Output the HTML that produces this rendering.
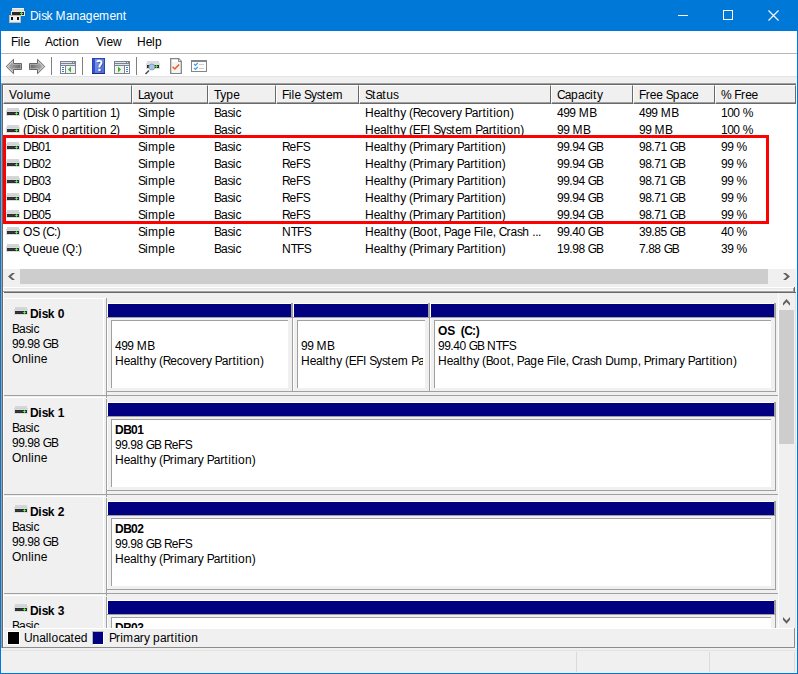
<!DOCTYPE html><html><head><meta charset="utf-8"><style>
*{margin:0;padding:0;box-sizing:border-box}
html,body{width:798px;height:674px;overflow:hidden;background:#f0f0f0}
body{position:relative;font-family:"Liberation Sans",sans-serif;font-size:12px;color:#000}
div,span,svg{position:absolute}
.t{white-space:pre;line-height:15px;height:15px}
.b{font-weight:bold}
em{font-style:normal}
</style></head><body>
<div style="left:0px;top:0px;width:798px;height:31px;background:#0078d7"></div>
<div style="left:0px;top:0px;width:1px;height:674px;background:#0078d7"></div>
<div style="left:797px;top:0px;width:1px;height:674px;background:#0078d7"></div>
<div style="left:0px;top:673px;width:798px;height:1px;background:#0078d7"></div>
<svg style="left:9px;top:7px" width="17" height="17" viewBox="0 0 17 17" shape-rendering="crispEdges">
<rect x="3" y="1" width="12" height="4" fill="#dcdcdc"/>
<rect x="3" y="1" width="12" height="1" fill="#f2eee8"/>
<rect x="2" y="4" width="14" height="5" fill="#e6e6e6"/>
<rect x="3" y="5" width="12" height="3" fill="#2b2b2b"/>
<rect x="11" y="6" width="3" height="1" fill="#3cf03c"/><rect x="12" y="5" width="1" height="3" fill="#3cf03c"/>
<rect x="0" y="8" width="12" height="8" fill="#c8b8a8"/>
<rect x="1" y="9" width="10" height="6" fill="#eeeeee"/>
<rect x="2" y="10" width="2" height="3" fill="#111"/>
<rect x="8" y="10" width="2" height="3" fill="#111"/>
</svg>
<span class="t" style="left:30px;top:9px;color:#fff"><em style="letter-spacing:-0.4px">D</em><em style="letter-spacing:0.2px">i</em><em style="letter-spacing:-0.7px">s</em>k<em style="letter-spacing:-0.2px"> </em><em style="letter-spacing:0.5px">M</em><em style="letter-spacing:-0.3px">a</em><em style="letter-spacing:0.15px">n</em><em style="letter-spacing:-0.3px">a</em><em style="letter-spacing:0.3px">g</em><em style="letter-spacing:-0.25px">e</em><em style="letter-spacing:0.4px">m</em><em style="letter-spacing:-0.25px">e</em><em style="letter-spacing:0.15px">n</em><em style="letter-spacing:0.6px">t</em></span>
<div style="left:678px;top:15px;width:10px;height:1px;background:#fff"></div>
<div style="left:723px;top:10px;width:10px;height:10px;border:1px solid #fff"></div>
<svg style="left:768px;top:10px" width="11" height="11" viewBox="0 0 11 11"><path d="M0.5 0.5L10.5 10.5M10.5 0.5L0.5 10.5" stroke="#fff" stroke-width="1.1"/></svg>
<div style="left:1px;top:31px;width:796px;height:22px;background:#fff"></div>
<span class="t" style="left:11px;top:35px;"><em style="letter-spacing:-0.7px">F</em><em style="letter-spacing:0.2px">il</em><em style="letter-spacing:-0.25px">e</em></span>
<span class="t" style="left:45px;top:35px;"><em style="letter-spacing:-0.2px">A</em><em style="letter-spacing:-0.4px">c</em><em style="letter-spacing:0.6px">t</em><em style="letter-spacing:0.2px">i</em><em style="letter-spacing:0.35px">o</em><em style="letter-spacing:0.15px">n</em></span>
<span class="t" style="left:96px;top:35px;"><em style="letter-spacing:-0.4px">V</em><em style="letter-spacing:0.2px">i</em><em style="letter-spacing:-0.25px">e</em>w</span>
<span class="t" style="left:137px;top:35px;">H<em style="letter-spacing:-0.25px">e</em><em style="letter-spacing:0.2px">l</em><em style="letter-spacing:0.35px">p</em></span>
<div style="left:1px;top:53px;width:796px;height:1px;background:#b6b6b6"></div>
<div style="left:1px;top:54px;width:796px;height:22px;background:#fff"></div>
<div style="left:1px;top:76px;width:796px;height:1px;background:#e3e3e3"></div>
<svg style="left:5px;top:58px" width="18" height="17" viewBox="0 0 18 17">
<defs><linearGradient id="gs" x1="0" y1="0" x2="1" y2="0"><stop offset="0" stop-color="#b0b0b0"/><stop offset="1" stop-color="#6a6a6a"/></linearGradient>
<linearGradient id="gs2" x1="1" y1="0" x2="0" y2="0"><stop offset="0" stop-color="#b0b0b0"/><stop offset="1" stop-color="#6a6a6a"/></linearGradient></defs>
<path d="M1.2 8.5L8.5 1.3V5.5H16.5V11.5H8.5V15.7Z" fill="#cfcfcf" stroke="#676767" stroke-width="1" stroke-linejoin="round"/>
<path d="M3.2 8.5L7.5 4.2V6.5H15.5V10.5H7.5V12.8Z" fill="url(#gs)"/>
</svg>
<svg style="left:28px;top:58px" width="18" height="17" viewBox="0 0 18 17">
<path d="M16.8 8.5L9.5 1.3V5.5H1.5V11.5H9.5V15.7Z" fill="#cfcfcf" stroke="#676767" stroke-width="1" stroke-linejoin="round"/>
<path d="M14.8 8.5L10.5 4.2V6.5H2.5V10.5H10.5V12.8Z" fill="url(#gs2)"/>
</svg>
<div style="left:51px;top:57px;width:1px;height:18px;background:#808080"></div>
<div style="left:82px;top:57px;width:1px;height:18px;background:#808080"></div>
<div style="left:136px;top:57px;width:1px;height:18px;background:#808080"></div>
<svg style="left:60px;top:61px" width="16" height="13" viewBox="0 0 16 13" shape-rendering="crispEdges">
<rect x="0" y="0" width="16" height="13" fill="#7b8391"/>
<rect x="1" y="1" width="11" height="1" fill="#dfe4ea"/><rect x="13" y="1" width="1" height="1" fill="#dfe4ea"/><rect x="14" y="1" width="1" height="1" fill="#7b8391"/>
<rect x="1" y="3" width="14" height="1" fill="#dfe4ea"/>
<rect x="1" y="5" width="4" height="7" fill="#fff"/>
<rect x="6" y="5" width="9" height="7" fill="#f2f2f2"/>
<rect x="2" y="6" width="2" height="1" fill="#3f7fcf"/><rect x="2" y="8" width="2" height="1" fill="#3f7fcf"/><rect x="2" y="10" width="2" height="1" fill="#3f7fcf"/>
<path d="M8 8.5L11 5.5V11.5Z" fill="#3cb02c" shape-rendering="auto"/>
</svg>
<svg style="left:92px;top:58px" width="13" height="16" viewBox="0 0 13 16">
<defs><linearGradient id="gh" x1="0" y1="0" x2="1" y2="1"><stop offset="0" stop-color="#7a98ee"/><stop offset="1" stop-color="#4a6ad8"/></linearGradient></defs>
<rect x="0" y="0" width="13" height="16" fill="#2a44b4"/>
<rect x="3" y="1" width="9" height="14" fill="url(#gh)"/>
<rect x="1" y="1" width="2" height="14" fill="#3552c8"/>
<rect x="0" y="15" width="13" height="1" fill="#1c2a78"/>
<path d="M6 4.8C6.3 3.1 10.5 2.8 10.3 5.3C10.2 7 8.3 7.3 8.3 9.3V10.1" fill="none" stroke="#24306a" stroke-width="2" opacity="0.6"/>
<rect x="7.3" y="11.5" width="2.2" height="2.2" fill="#24306a" opacity="0.6"/>
<path d="M5.2 4.2C5.5 2.5 9.7 2.2 9.5 4.7C9.4 6.4 7.5 6.7 7.5 8.7V9.6" fill="none" stroke="#fff" stroke-width="2"/>
<rect x="6.4" y="10.9" width="2.2" height="2.2" fill="#fff"/>
</svg>
<svg style="left:114px;top:61px" width="16" height="13" viewBox="0 0 16 13" shape-rendering="crispEdges">
<rect x="0" y="0" width="16" height="13" fill="#7b8391"/>
<rect x="1" y="1" width="11" height="1" fill="#dfe4ea"/><rect x="13" y="1" width="1" height="1" fill="#dfe4ea"/>
<rect x="1" y="3" width="14" height="1" fill="#dfe4ea"/>
<rect x="1" y="5" width="9" height="7" fill="#f2f2f2"/>
<rect x="11" y="5" width="4" height="7" fill="#fff"/>
<rect x="12" y="6" width="2" height="1" fill="#3f7fcf"/><rect x="12" y="8" width="2" height="1" fill="#3f7fcf"/><rect x="12" y="10" width="2" height="1" fill="#3f7fcf"/>
<path d="M4 5.5L7 8.5L4 11.5Z" fill="#3cb02c" shape-rendering="auto"/>
</svg>
<svg style="left:144px;top:60px" width="17" height="15" viewBox="0 0 17 15">
<rect x="3" y="1" width="12" height="3" fill="#d8dadd"/>
<rect x="2" y="3" width="14" height="6" fill="#dcdee1"/>
<rect x="3" y="5" width="12" height="3" fill="#2a2a2a"/>
<rect x="11" y="6" width="3" height="1" fill="#2ee82e"/><rect x="12" y="5" width="1" height="3" fill="#2ee82e"/>
<path d="M5 10.5L1.5 14" stroke="#4a4f5a" stroke-width="1.6"/>
<circle cx="7.8" cy="7" r="3" fill="#a9c3e0" stroke="#7c93b0" stroke-width="0.8"/>
</svg>
<svg style="left:170px;top:58px" width="12" height="16" viewBox="0 0 12 16">
<path d="M0.7 0.7H8.8L11.3 3.2V15.3H0.7Z" fill="#fff" stroke="#858585" stroke-width="1.3"/>
<path d="M8.5 0.7V3.5H11.3" fill="#eee" stroke="#858585" stroke-width="1"/>
<rect x="2" y="4" width="8" height="11" fill="#f4f4f4"/>
<path d="M2.6 8.8L4.8 11L9.2 6.4" fill="none" stroke="#f05a1e" stroke-width="1.5"/>
</svg>
<svg style="left:191px;top:60px" width="16" height="12" viewBox="0 0 16 12" shape-rendering="crispEdges">
<rect x="0" y="0" width="16" height="12" fill="#83878c"/>
<rect x="1" y="2" width="14" height="9" fill="#fff"/>
<rect x="8" y="4" width="5" height="1" fill="#cfcfcf"/><rect x="8" y="8" width="5" height="1" fill="#cfcfcf"/>
<path d="M3 3.8L4.5 5.3L6.8 2.8M3 7.8L4.5 9.3L6.8 6.8" fill="none" stroke="#3d97e6" stroke-width="1.2" shape-rendering="auto"/>
</svg>
<div style="left:1px;top:83px;width:796px;height:1px;background:#a0a0a0"></div>
<div style="left:1px;top:83px;width:1px;height:565px;background:#a0a0a0"></div>
<div style="left:2px;top:84px;width:794px;height:1px;background:#696969"></div>
<div style="left:2px;top:84px;width:1px;height:564px;background:#696969"></div>
<div style="left:796px;top:83px;width:1px;height:205px;background:#fff"></div>
<div style="left:3px;top:287px;width:794px;height:1px;background:#fff"></div>
<div style="left:3px;top:85px;width:793px;height:184px;background:#fff"></div>
<div style="left:3px;top:85px;width:129px;height:19px;background:#f0f0f0;border-top:1px solid #fff;border-left:1px solid #fff;border-right:1px solid #696969;border-bottom:1px solid #696969;box-shadow:inset 0 -1px 0 #a0a0a0"></div>
<span class="t" style="left:9px;top:88px;"><em style="letter-spacing:-0.4px">V</em><em style="letter-spacing:0.35px">o</em><em style="letter-spacing:0.2px">l</em><em style="letter-spacing:0.15px">u</em><em style="letter-spacing:0.4px">m</em><em style="letter-spacing:-0.25px">e</em></span>
<div style="left:132px;top:85px;width:76px;height:19px;background:#f0f0f0;border-top:1px solid #fff;border-left:1px solid #fff;border-right:1px solid #696969;border-bottom:1px solid #696969;box-shadow:inset 0 -1px 0 #a0a0a0"></div>
<span class="t" style="left:138px;top:88px;"><em style="letter-spacing:-1.0px">L</em><em style="letter-spacing:-0.3px">a</em><em style="letter-spacing:-0.2px">y</em><em style="letter-spacing:0.35px">o</em><em style="letter-spacing:0.15px">u</em><em style="letter-spacing:0.6px">t</em></span>
<div style="left:208px;top:85px;width:68px;height:19px;background:#f0f0f0;border-top:1px solid #fff;border-left:1px solid #fff;border-right:1px solid #696969;border-bottom:1px solid #696969;box-shadow:inset 0 -1px 0 #a0a0a0"></div>
<span class="t" style="left:214px;top:88px;"><em style="letter-spacing:-1.0px">T</em><em style="letter-spacing:-0.2px">y</em><em style="letter-spacing:0.35px">p</em><em style="letter-spacing:-0.25px">e</em></span>
<div style="left:276px;top:85px;width:83px;height:19px;background:#f0f0f0;border-top:1px solid #fff;border-left:1px solid #fff;border-right:1px solid #696969;border-bottom:1px solid #696969;box-shadow:inset 0 -1px 0 #a0a0a0"></div>
<span class="t" style="left:282px;top:88px;"><em style="letter-spacing:-0.7px">F</em><em style="letter-spacing:0.2px">il</em><em style="letter-spacing:-0.25px">e</em><em style="letter-spacing:-0.2px"> </em><em style="letter-spacing:-1.0px">S</em><em style="letter-spacing:-0.2px">y</em><em style="letter-spacing:-0.7px">s</em><em style="letter-spacing:0.6px">t</em><em style="letter-spacing:-0.25px">e</em><em style="letter-spacing:0.4px">m</em></span>
<div style="left:359px;top:85px;width:192px;height:19px;background:#f0f0f0;border-top:1px solid #fff;border-left:1px solid #fff;border-right:1px solid #696969;border-bottom:1px solid #696969;box-shadow:inset 0 -1px 0 #a0a0a0"></div>
<span class="t" style="left:365px;top:88px;"><em style="letter-spacing:-1.0px">S</em><em style="letter-spacing:0.6px">t</em><em style="letter-spacing:-0.3px">a</em><em style="letter-spacing:0.6px">t</em><em style="letter-spacing:0.15px">u</em><em style="letter-spacing:-0.7px">s</em></span>
<div style="left:551px;top:85px;width:82px;height:19px;background:#f0f0f0;border-top:1px solid #fff;border-left:1px solid #fff;border-right:1px solid #696969;border-bottom:1px solid #696969;box-shadow:inset 0 -1px 0 #a0a0a0"></div>
<span class="t" style="left:557px;top:88px;"><em style="letter-spacing:-1.0px">C</em><em style="letter-spacing:-0.3px">a</em><em style="letter-spacing:0.35px">p</em><em style="letter-spacing:-0.3px">a</em><em style="letter-spacing:-0.4px">c</em><em style="letter-spacing:0.2px">i</em><em style="letter-spacing:0.6px">t</em><em style="letter-spacing:-0.2px">y</em></span>
<div style="left:633px;top:85px;width:82px;height:19px;background:#f0f0f0;border-top:1px solid #fff;border-left:1px solid #fff;border-right:1px solid #696969;border-bottom:1px solid #696969;box-shadow:inset 0 -1px 0 #a0a0a0"></div>
<span class="t" style="left:639px;top:88px;"><em style="letter-spacing:-0.7px">F</em><em style="letter-spacing:0.2px">r</em><em style="letter-spacing:-0.25px">ee</em><em style="letter-spacing:-0.2px"> </em><em style="letter-spacing:-1.0px">S</em><em style="letter-spacing:0.35px">p</em><em style="letter-spacing:-0.3px">a</em><em style="letter-spacing:-0.4px">c</em><em style="letter-spacing:-0.25px">e</em></span>
<div style="left:715px;top:85px;width:81px;height:19px;background:#f0f0f0;border-top:1px solid #fff;border-left:1px solid #fff;border-right:1px solid #696969;border-bottom:1px solid #696969;box-shadow:inset 0 -1px 0 #a0a0a0"></div>
<span class="t" style="left:721px;top:88px;"><em style="letter-spacing:-0.5px">%</em><em style="letter-spacing:-0.2px"> </em><em style="letter-spacing:-0.7px">F</em><em style="letter-spacing:0.2px">r</em><em style="letter-spacing:-0.25px">ee</em></span>
<svg style="left:6px;top:108px" width="14" height="8" viewBox="0 0 14 8" shape-rendering="crispEdges"><rect x="1" y="0" width="12" height="2" fill="#d4d6da"/><rect x="0" y="2" width="14" height="6" fill="#d9dbdf"/><rect x="1" y="2" width="12" height="1" fill="#cfd1d5"/><rect x="1" y="4" width="12" height="3" fill="#2d2d2d"/><rect x="1" y="5" width="8" height="1" fill="#383838"/><rect x="9" y="5" width="3" height="1" fill="#3ad83a"/><rect x="10" y="4" width="1" height="3" fill="#3ad83a"/><rect x="10" y="5" width="1" height="1" fill="#6cff6c"/></svg>
<span class="t" style="left:23px;top:106px;"><em style="letter-spacing:-0.3px">(</em><em style="letter-spacing:-0.4px">D</em><em style="letter-spacing:0.2px">i</em><em style="letter-spacing:-0.7px">s</em>k<em style="letter-spacing:-0.2px"> </em><em style="letter-spacing:-0.5px">0</em><em style="letter-spacing:-0.2px"> </em><em style="letter-spacing:0.35px">p</em><em style="letter-spacing:-0.3px">a</em><em style="letter-spacing:0.2px">r</em><em style="letter-spacing:0.6px">t</em><em style="letter-spacing:0.2px">i</em><em style="letter-spacing:0.6px">t</em><em style="letter-spacing:0.2px">i</em><em style="letter-spacing:0.35px">o</em><em style="letter-spacing:0.15px">n</em><em style="letter-spacing:-0.2px"> </em><em style="letter-spacing:-0.5px">1</em><em style="letter-spacing:-0.3px">)</em></span>
<span class="t" style="left:138px;top:106px;"><em style="letter-spacing:-1.0px">S</em><em style="letter-spacing:0.2px">i</em><em style="letter-spacing:0.4px">m</em><em style="letter-spacing:0.35px">p</em><em style="letter-spacing:0.2px">l</em><em style="letter-spacing:-0.25px">e</em></span>
<span class="t" style="left:214px;top:106px;"><em style="letter-spacing:-1.0px">B</em><em style="letter-spacing:-0.3px">a</em><em style="letter-spacing:-0.7px">s</em><em style="letter-spacing:0.2px">i</em><em style="letter-spacing:-0.4px">c</em></span>
<span class="t" style="left:365px;top:106px;width:182px;overflow:hidden">H<em style="letter-spacing:-0.25px">e</em><em style="letter-spacing:-0.3px">a</em><em style="letter-spacing:0.2px">l</em><em style="letter-spacing:0.6px">t</em><em style="letter-spacing:0.15px">h</em><em style="letter-spacing:-0.2px">y </em><em style="letter-spacing:-0.3px">(</em><em style="letter-spacing:-1.1px">R</em><em style="letter-spacing:-0.25px">e</em><em style="letter-spacing:-0.4px">c</em><em style="letter-spacing:0.35px">o</em><em style="letter-spacing:-0.2px">v</em><em style="letter-spacing:-0.25px">e</em><em style="letter-spacing:0.2px">r</em><em style="letter-spacing:-0.2px">y </em><em style="letter-spacing:-1.0px">P</em><em style="letter-spacing:-0.3px">a</em><em style="letter-spacing:0.2px">r</em><em style="letter-spacing:0.6px">t</em><em style="letter-spacing:0.2px">i</em><em style="letter-spacing:0.6px">t</em><em style="letter-spacing:0.2px">i</em><em style="letter-spacing:0.35px">o</em><em style="letter-spacing:0.15px">n</em><em style="letter-spacing:-0.3px">)</em></span>
<span class="t" style="left:557px;top:106px;"><em style="letter-spacing:-0.5px">499</em><em style="letter-spacing:-0.2px"> </em><em style="letter-spacing:0.5px">M</em><em style="letter-spacing:-1.0px">B</em></span>
<span class="t" style="left:639px;top:106px;"><em style="letter-spacing:-0.5px">499</em><em style="letter-spacing:-0.2px"> </em><em style="letter-spacing:0.5px">M</em><em style="letter-spacing:-1.0px">B</em></span>
<span class="t" style="left:721px;top:106px;"><em style="letter-spacing:-0.5px">100</em><em style="letter-spacing:-0.2px"> </em><em style="letter-spacing:-0.5px">%</em></span>
<svg style="left:6px;top:125px" width="14" height="8" viewBox="0 0 14 8" shape-rendering="crispEdges"><rect x="1" y="0" width="12" height="2" fill="#d4d6da"/><rect x="0" y="2" width="14" height="6" fill="#d9dbdf"/><rect x="1" y="2" width="12" height="1" fill="#cfd1d5"/><rect x="1" y="4" width="12" height="3" fill="#2d2d2d"/><rect x="1" y="5" width="8" height="1" fill="#383838"/><rect x="9" y="5" width="3" height="1" fill="#3ad83a"/><rect x="10" y="4" width="1" height="3" fill="#3ad83a"/><rect x="10" y="5" width="1" height="1" fill="#6cff6c"/></svg>
<span class="t" style="left:23px;top:123px;"><em style="letter-spacing:-0.3px">(</em><em style="letter-spacing:-0.4px">D</em><em style="letter-spacing:0.2px">i</em><em style="letter-spacing:-0.7px">s</em>k<em style="letter-spacing:-0.2px"> </em><em style="letter-spacing:-0.5px">0</em><em style="letter-spacing:-0.2px"> </em><em style="letter-spacing:0.35px">p</em><em style="letter-spacing:-0.3px">a</em><em style="letter-spacing:0.2px">r</em><em style="letter-spacing:0.6px">t</em><em style="letter-spacing:0.2px">i</em><em style="letter-spacing:0.6px">t</em><em style="letter-spacing:0.2px">i</em><em style="letter-spacing:0.35px">o</em><em style="letter-spacing:0.15px">n</em><em style="letter-spacing:-0.2px"> </em><em style="letter-spacing:-0.5px">2</em><em style="letter-spacing:-0.3px">)</em></span>
<span class="t" style="left:138px;top:123px;"><em style="letter-spacing:-1.0px">S</em><em style="letter-spacing:0.2px">i</em><em style="letter-spacing:0.4px">m</em><em style="letter-spacing:0.35px">p</em><em style="letter-spacing:0.2px">l</em><em style="letter-spacing:-0.25px">e</em></span>
<span class="t" style="left:214px;top:123px;"><em style="letter-spacing:-1.0px">B</em><em style="letter-spacing:-0.3px">a</em><em style="letter-spacing:-0.7px">s</em><em style="letter-spacing:0.2px">i</em><em style="letter-spacing:-0.4px">c</em></span>
<span class="t" style="left:365px;top:123px;width:182px;overflow:hidden">H<em style="letter-spacing:-0.25px">e</em><em style="letter-spacing:-0.3px">a</em><em style="letter-spacing:0.2px">l</em><em style="letter-spacing:0.6px">t</em><em style="letter-spacing:0.15px">h</em><em style="letter-spacing:-0.2px">y </em><em style="letter-spacing:-0.3px">(</em><em style="letter-spacing:-0.5px">E</em><em style="letter-spacing:-0.7px">F</em><em style="letter-spacing:-0.2px">I </em><em style="letter-spacing:-1.0px">S</em><em style="letter-spacing:-0.2px">y</em><em style="letter-spacing:-0.7px">s</em><em style="letter-spacing:0.6px">t</em><em style="letter-spacing:-0.25px">e</em><em style="letter-spacing:0.4px">m</em><em style="letter-spacing:-0.2px"> </em><em style="letter-spacing:-1.0px">P</em><em style="letter-spacing:-0.3px">a</em><em style="letter-spacing:0.2px">r</em><em style="letter-spacing:0.6px">t</em><em style="letter-spacing:0.2px">i</em><em style="letter-spacing:0.6px">t</em><em style="letter-spacing:0.2px">i</em><em style="letter-spacing:0.35px">o</em><em style="letter-spacing:0.15px">n</em><em style="letter-spacing:-0.3px">)</em></span>
<span class="t" style="left:557px;top:123px;"><em style="letter-spacing:-0.5px">99</em><em style="letter-spacing:-0.2px"> </em><em style="letter-spacing:0.5px">M</em><em style="letter-spacing:-1.0px">B</em></span>
<span class="t" style="left:639px;top:123px;"><em style="letter-spacing:-0.5px">99</em><em style="letter-spacing:-0.2px"> </em><em style="letter-spacing:0.5px">M</em><em style="letter-spacing:-1.0px">B</em></span>
<span class="t" style="left:721px;top:123px;"><em style="letter-spacing:-0.5px">100</em><em style="letter-spacing:-0.2px"> </em><em style="letter-spacing:-0.5px">%</em></span>
<svg style="left:6px;top:142px" width="14" height="8" viewBox="0 0 14 8" shape-rendering="crispEdges"><rect x="1" y="0" width="12" height="2" fill="#d4d6da"/><rect x="0" y="2" width="14" height="6" fill="#d9dbdf"/><rect x="1" y="2" width="12" height="1" fill="#cfd1d5"/><rect x="1" y="4" width="12" height="3" fill="#2d2d2d"/><rect x="1" y="5" width="8" height="1" fill="#383838"/><rect x="9" y="5" width="3" height="1" fill="#3ad83a"/><rect x="10" y="4" width="1" height="3" fill="#3ad83a"/><rect x="10" y="5" width="1" height="1" fill="#6cff6c"/></svg>
<span class="t" style="left:23px;top:140px;"><em style="letter-spacing:-0.4px">D</em><em style="letter-spacing:-1.0px">B</em><em style="letter-spacing:-0.5px">01</em></span>
<span class="t" style="left:138px;top:140px;"><em style="letter-spacing:-1.0px">S</em><em style="letter-spacing:0.2px">i</em><em style="letter-spacing:0.4px">m</em><em style="letter-spacing:0.35px">p</em><em style="letter-spacing:0.2px">l</em><em style="letter-spacing:-0.25px">e</em></span>
<span class="t" style="left:214px;top:140px;"><em style="letter-spacing:-1.0px">B</em><em style="letter-spacing:-0.3px">a</em><em style="letter-spacing:-0.7px">s</em><em style="letter-spacing:0.2px">i</em><em style="letter-spacing:-0.4px">c</em></span>
<span class="t" style="left:282px;top:140px;"><em style="letter-spacing:-1.1px">R</em><em style="letter-spacing:-0.25px">e</em><em style="letter-spacing:-0.7px">F</em><em style="letter-spacing:-1.0px">S</em></span>
<span class="t" style="left:365px;top:140px;width:182px;overflow:hidden">H<em style="letter-spacing:-0.25px">e</em><em style="letter-spacing:-0.3px">a</em><em style="letter-spacing:0.2px">l</em><em style="letter-spacing:0.6px">t</em><em style="letter-spacing:0.15px">h</em><em style="letter-spacing:-0.2px">y </em><em style="letter-spacing:-0.3px">(</em><em style="letter-spacing:-1.0px">P</em><em style="letter-spacing:0.2px">ri</em><em style="letter-spacing:0.4px">m</em><em style="letter-spacing:-0.3px">a</em><em style="letter-spacing:0.2px">r</em><em style="letter-spacing:-0.2px">y </em><em style="letter-spacing:-1.0px">P</em><em style="letter-spacing:-0.3px">a</em><em style="letter-spacing:0.2px">r</em><em style="letter-spacing:0.6px">t</em><em style="letter-spacing:0.2px">i</em><em style="letter-spacing:0.6px">t</em><em style="letter-spacing:0.2px">i</em><em style="letter-spacing:0.35px">o</em><em style="letter-spacing:0.15px">n</em><em style="letter-spacing:-0.3px">)</em></span>
<span class="t" style="left:557px;top:140px;"><em style="letter-spacing:-0.5px">99</em><em style="letter-spacing:-0.4px">.</em><em style="letter-spacing:-0.5px">94</em><em style="letter-spacing:-0.2px"> </em><em style="letter-spacing:-1.2px">G</em><em style="letter-spacing:-1.0px">B</em></span>
<span class="t" style="left:639px;top:140px;"><em style="letter-spacing:-0.5px">98</em><em style="letter-spacing:-0.4px">.</em><em style="letter-spacing:-0.5px">71</em><em style="letter-spacing:-0.2px"> </em><em style="letter-spacing:-1.2px">G</em><em style="letter-spacing:-1.0px">B</em></span>
<span class="t" style="left:721px;top:140px;"><em style="letter-spacing:-0.5px">99</em><em style="letter-spacing:-0.2px"> </em><em style="letter-spacing:-0.5px">%</em></span>
<svg style="left:6px;top:159px" width="14" height="8" viewBox="0 0 14 8" shape-rendering="crispEdges"><rect x="1" y="0" width="12" height="2" fill="#d4d6da"/><rect x="0" y="2" width="14" height="6" fill="#d9dbdf"/><rect x="1" y="2" width="12" height="1" fill="#cfd1d5"/><rect x="1" y="4" width="12" height="3" fill="#2d2d2d"/><rect x="1" y="5" width="8" height="1" fill="#383838"/><rect x="9" y="5" width="3" height="1" fill="#3ad83a"/><rect x="10" y="4" width="1" height="3" fill="#3ad83a"/><rect x="10" y="5" width="1" height="1" fill="#6cff6c"/></svg>
<span class="t" style="left:23px;top:157px;"><em style="letter-spacing:-0.4px">D</em><em style="letter-spacing:-1.0px">B</em><em style="letter-spacing:-0.5px">02</em></span>
<span class="t" style="left:138px;top:157px;"><em style="letter-spacing:-1.0px">S</em><em style="letter-spacing:0.2px">i</em><em style="letter-spacing:0.4px">m</em><em style="letter-spacing:0.35px">p</em><em style="letter-spacing:0.2px">l</em><em style="letter-spacing:-0.25px">e</em></span>
<span class="t" style="left:214px;top:157px;"><em style="letter-spacing:-1.0px">B</em><em style="letter-spacing:-0.3px">a</em><em style="letter-spacing:-0.7px">s</em><em style="letter-spacing:0.2px">i</em><em style="letter-spacing:-0.4px">c</em></span>
<span class="t" style="left:282px;top:157px;"><em style="letter-spacing:-1.1px">R</em><em style="letter-spacing:-0.25px">e</em><em style="letter-spacing:-0.7px">F</em><em style="letter-spacing:-1.0px">S</em></span>
<span class="t" style="left:365px;top:157px;width:182px;overflow:hidden">H<em style="letter-spacing:-0.25px">e</em><em style="letter-spacing:-0.3px">a</em><em style="letter-spacing:0.2px">l</em><em style="letter-spacing:0.6px">t</em><em style="letter-spacing:0.15px">h</em><em style="letter-spacing:-0.2px">y </em><em style="letter-spacing:-0.3px">(</em><em style="letter-spacing:-1.0px">P</em><em style="letter-spacing:0.2px">ri</em><em style="letter-spacing:0.4px">m</em><em style="letter-spacing:-0.3px">a</em><em style="letter-spacing:0.2px">r</em><em style="letter-spacing:-0.2px">y </em><em style="letter-spacing:-1.0px">P</em><em style="letter-spacing:-0.3px">a</em><em style="letter-spacing:0.2px">r</em><em style="letter-spacing:0.6px">t</em><em style="letter-spacing:0.2px">i</em><em style="letter-spacing:0.6px">t</em><em style="letter-spacing:0.2px">i</em><em style="letter-spacing:0.35px">o</em><em style="letter-spacing:0.15px">n</em><em style="letter-spacing:-0.3px">)</em></span>
<span class="t" style="left:557px;top:157px;"><em style="letter-spacing:-0.5px">99</em><em style="letter-spacing:-0.4px">.</em><em style="letter-spacing:-0.5px">94</em><em style="letter-spacing:-0.2px"> </em><em style="letter-spacing:-1.2px">G</em><em style="letter-spacing:-1.0px">B</em></span>
<span class="t" style="left:639px;top:157px;"><em style="letter-spacing:-0.5px">98</em><em style="letter-spacing:-0.4px">.</em><em style="letter-spacing:-0.5px">71</em><em style="letter-spacing:-0.2px"> </em><em style="letter-spacing:-1.2px">G</em><em style="letter-spacing:-1.0px">B</em></span>
<span class="t" style="left:721px;top:157px;"><em style="letter-spacing:-0.5px">99</em><em style="letter-spacing:-0.2px"> </em><em style="letter-spacing:-0.5px">%</em></span>
<svg style="left:6px;top:176px" width="14" height="8" viewBox="0 0 14 8" shape-rendering="crispEdges"><rect x="1" y="0" width="12" height="2" fill="#d4d6da"/><rect x="0" y="2" width="14" height="6" fill="#d9dbdf"/><rect x="1" y="2" width="12" height="1" fill="#cfd1d5"/><rect x="1" y="4" width="12" height="3" fill="#2d2d2d"/><rect x="1" y="5" width="8" height="1" fill="#383838"/><rect x="9" y="5" width="3" height="1" fill="#3ad83a"/><rect x="10" y="4" width="1" height="3" fill="#3ad83a"/><rect x="10" y="5" width="1" height="1" fill="#6cff6c"/></svg>
<span class="t" style="left:23px;top:174px;"><em style="letter-spacing:-0.4px">D</em><em style="letter-spacing:-1.0px">B</em><em style="letter-spacing:-0.5px">03</em></span>
<span class="t" style="left:138px;top:174px;"><em style="letter-spacing:-1.0px">S</em><em style="letter-spacing:0.2px">i</em><em style="letter-spacing:0.4px">m</em><em style="letter-spacing:0.35px">p</em><em style="letter-spacing:0.2px">l</em><em style="letter-spacing:-0.25px">e</em></span>
<span class="t" style="left:214px;top:174px;"><em style="letter-spacing:-1.0px">B</em><em style="letter-spacing:-0.3px">a</em><em style="letter-spacing:-0.7px">s</em><em style="letter-spacing:0.2px">i</em><em style="letter-spacing:-0.4px">c</em></span>
<span class="t" style="left:282px;top:174px;"><em style="letter-spacing:-1.1px">R</em><em style="letter-spacing:-0.25px">e</em><em style="letter-spacing:-0.7px">F</em><em style="letter-spacing:-1.0px">S</em></span>
<span class="t" style="left:365px;top:174px;width:182px;overflow:hidden">H<em style="letter-spacing:-0.25px">e</em><em style="letter-spacing:-0.3px">a</em><em style="letter-spacing:0.2px">l</em><em style="letter-spacing:0.6px">t</em><em style="letter-spacing:0.15px">h</em><em style="letter-spacing:-0.2px">y </em><em style="letter-spacing:-0.3px">(</em><em style="letter-spacing:-1.0px">P</em><em style="letter-spacing:0.2px">ri</em><em style="letter-spacing:0.4px">m</em><em style="letter-spacing:-0.3px">a</em><em style="letter-spacing:0.2px">r</em><em style="letter-spacing:-0.2px">y </em><em style="letter-spacing:-1.0px">P</em><em style="letter-spacing:-0.3px">a</em><em style="letter-spacing:0.2px">r</em><em style="letter-spacing:0.6px">t</em><em style="letter-spacing:0.2px">i</em><em style="letter-spacing:0.6px">t</em><em style="letter-spacing:0.2px">i</em><em style="letter-spacing:0.35px">o</em><em style="letter-spacing:0.15px">n</em><em style="letter-spacing:-0.3px">)</em></span>
<span class="t" style="left:557px;top:174px;"><em style="letter-spacing:-0.5px">99</em><em style="letter-spacing:-0.4px">.</em><em style="letter-spacing:-0.5px">94</em><em style="letter-spacing:-0.2px"> </em><em style="letter-spacing:-1.2px">G</em><em style="letter-spacing:-1.0px">B</em></span>
<span class="t" style="left:639px;top:174px;"><em style="letter-spacing:-0.5px">98</em><em style="letter-spacing:-0.4px">.</em><em style="letter-spacing:-0.5px">71</em><em style="letter-spacing:-0.2px"> </em><em style="letter-spacing:-1.2px">G</em><em style="letter-spacing:-1.0px">B</em></span>
<span class="t" style="left:721px;top:174px;"><em style="letter-spacing:-0.5px">99</em><em style="letter-spacing:-0.2px"> </em><em style="letter-spacing:-0.5px">%</em></span>
<svg style="left:6px;top:193px" width="14" height="8" viewBox="0 0 14 8" shape-rendering="crispEdges"><rect x="1" y="0" width="12" height="2" fill="#d4d6da"/><rect x="0" y="2" width="14" height="6" fill="#d9dbdf"/><rect x="1" y="2" width="12" height="1" fill="#cfd1d5"/><rect x="1" y="4" width="12" height="3" fill="#2d2d2d"/><rect x="1" y="5" width="8" height="1" fill="#383838"/><rect x="9" y="5" width="3" height="1" fill="#3ad83a"/><rect x="10" y="4" width="1" height="3" fill="#3ad83a"/><rect x="10" y="5" width="1" height="1" fill="#6cff6c"/></svg>
<span class="t" style="left:23px;top:191px;"><em style="letter-spacing:-0.4px">D</em><em style="letter-spacing:-1.0px">B</em><em style="letter-spacing:-0.5px">04</em></span>
<span class="t" style="left:138px;top:191px;"><em style="letter-spacing:-1.0px">S</em><em style="letter-spacing:0.2px">i</em><em style="letter-spacing:0.4px">m</em><em style="letter-spacing:0.35px">p</em><em style="letter-spacing:0.2px">l</em><em style="letter-spacing:-0.25px">e</em></span>
<span class="t" style="left:214px;top:191px;"><em style="letter-spacing:-1.0px">B</em><em style="letter-spacing:-0.3px">a</em><em style="letter-spacing:-0.7px">s</em><em style="letter-spacing:0.2px">i</em><em style="letter-spacing:-0.4px">c</em></span>
<span class="t" style="left:282px;top:191px;"><em style="letter-spacing:-1.1px">R</em><em style="letter-spacing:-0.25px">e</em><em style="letter-spacing:-0.7px">F</em><em style="letter-spacing:-1.0px">S</em></span>
<span class="t" style="left:365px;top:191px;width:182px;overflow:hidden">H<em style="letter-spacing:-0.25px">e</em><em style="letter-spacing:-0.3px">a</em><em style="letter-spacing:0.2px">l</em><em style="letter-spacing:0.6px">t</em><em style="letter-spacing:0.15px">h</em><em style="letter-spacing:-0.2px">y </em><em style="letter-spacing:-0.3px">(</em><em style="letter-spacing:-1.0px">P</em><em style="letter-spacing:0.2px">ri</em><em style="letter-spacing:0.4px">m</em><em style="letter-spacing:-0.3px">a</em><em style="letter-spacing:0.2px">r</em><em style="letter-spacing:-0.2px">y </em><em style="letter-spacing:-1.0px">P</em><em style="letter-spacing:-0.3px">a</em><em style="letter-spacing:0.2px">r</em><em style="letter-spacing:0.6px">t</em><em style="letter-spacing:0.2px">i</em><em style="letter-spacing:0.6px">t</em><em style="letter-spacing:0.2px">i</em><em style="letter-spacing:0.35px">o</em><em style="letter-spacing:0.15px">n</em><em style="letter-spacing:-0.3px">)</em></span>
<span class="t" style="left:557px;top:191px;"><em style="letter-spacing:-0.5px">99</em><em style="letter-spacing:-0.4px">.</em><em style="letter-spacing:-0.5px">94</em><em style="letter-spacing:-0.2px"> </em><em style="letter-spacing:-1.2px">G</em><em style="letter-spacing:-1.0px">B</em></span>
<span class="t" style="left:639px;top:191px;"><em style="letter-spacing:-0.5px">98</em><em style="letter-spacing:-0.4px">.</em><em style="letter-spacing:-0.5px">71</em><em style="letter-spacing:-0.2px"> </em><em style="letter-spacing:-1.2px">G</em><em style="letter-spacing:-1.0px">B</em></span>
<span class="t" style="left:721px;top:191px;"><em style="letter-spacing:-0.5px">99</em><em style="letter-spacing:-0.2px"> </em><em style="letter-spacing:-0.5px">%</em></span>
<svg style="left:6px;top:210px" width="14" height="8" viewBox="0 0 14 8" shape-rendering="crispEdges"><rect x="1" y="0" width="12" height="2" fill="#d4d6da"/><rect x="0" y="2" width="14" height="6" fill="#d9dbdf"/><rect x="1" y="2" width="12" height="1" fill="#cfd1d5"/><rect x="1" y="4" width="12" height="3" fill="#2d2d2d"/><rect x="1" y="5" width="8" height="1" fill="#383838"/><rect x="9" y="5" width="3" height="1" fill="#3ad83a"/><rect x="10" y="4" width="1" height="3" fill="#3ad83a"/><rect x="10" y="5" width="1" height="1" fill="#6cff6c"/></svg>
<span class="t" style="left:23px;top:208px;"><em style="letter-spacing:-0.4px">D</em><em style="letter-spacing:-1.0px">B</em><em style="letter-spacing:-0.5px">05</em></span>
<span class="t" style="left:138px;top:208px;"><em style="letter-spacing:-1.0px">S</em><em style="letter-spacing:0.2px">i</em><em style="letter-spacing:0.4px">m</em><em style="letter-spacing:0.35px">p</em><em style="letter-spacing:0.2px">l</em><em style="letter-spacing:-0.25px">e</em></span>
<span class="t" style="left:214px;top:208px;"><em style="letter-spacing:-1.0px">B</em><em style="letter-spacing:-0.3px">a</em><em style="letter-spacing:-0.7px">s</em><em style="letter-spacing:0.2px">i</em><em style="letter-spacing:-0.4px">c</em></span>
<span class="t" style="left:282px;top:208px;"><em style="letter-spacing:-1.1px">R</em><em style="letter-spacing:-0.25px">e</em><em style="letter-spacing:-0.7px">F</em><em style="letter-spacing:-1.0px">S</em></span>
<span class="t" style="left:365px;top:208px;width:182px;overflow:hidden">H<em style="letter-spacing:-0.25px">e</em><em style="letter-spacing:-0.3px">a</em><em style="letter-spacing:0.2px">l</em><em style="letter-spacing:0.6px">t</em><em style="letter-spacing:0.15px">h</em><em style="letter-spacing:-0.2px">y </em><em style="letter-spacing:-0.3px">(</em><em style="letter-spacing:-1.0px">P</em><em style="letter-spacing:0.2px">ri</em><em style="letter-spacing:0.4px">m</em><em style="letter-spacing:-0.3px">a</em><em style="letter-spacing:0.2px">r</em><em style="letter-spacing:-0.2px">y </em><em style="letter-spacing:-1.0px">P</em><em style="letter-spacing:-0.3px">a</em><em style="letter-spacing:0.2px">r</em><em style="letter-spacing:0.6px">t</em><em style="letter-spacing:0.2px">i</em><em style="letter-spacing:0.6px">t</em><em style="letter-spacing:0.2px">i</em><em style="letter-spacing:0.35px">o</em><em style="letter-spacing:0.15px">n</em><em style="letter-spacing:-0.3px">)</em></span>
<span class="t" style="left:557px;top:208px;"><em style="letter-spacing:-0.5px">99</em><em style="letter-spacing:-0.4px">.</em><em style="letter-spacing:-0.5px">94</em><em style="letter-spacing:-0.2px"> </em><em style="letter-spacing:-1.2px">G</em><em style="letter-spacing:-1.0px">B</em></span>
<span class="t" style="left:639px;top:208px;"><em style="letter-spacing:-0.5px">98</em><em style="letter-spacing:-0.4px">.</em><em style="letter-spacing:-0.5px">71</em><em style="letter-spacing:-0.2px"> </em><em style="letter-spacing:-1.2px">G</em><em style="letter-spacing:-1.0px">B</em></span>
<span class="t" style="left:721px;top:208px;"><em style="letter-spacing:-0.5px">99</em><em style="letter-spacing:-0.2px"> </em><em style="letter-spacing:-0.5px">%</em></span>
<svg style="left:6px;top:227px" width="14" height="8" viewBox="0 0 14 8" shape-rendering="crispEdges"><rect x="1" y="0" width="12" height="2" fill="#d4d6da"/><rect x="0" y="2" width="14" height="6" fill="#d9dbdf"/><rect x="1" y="2" width="12" height="1" fill="#cfd1d5"/><rect x="1" y="4" width="12" height="3" fill="#2d2d2d"/><rect x="1" y="5" width="8" height="1" fill="#383838"/><rect x="9" y="5" width="3" height="1" fill="#3ad83a"/><rect x="10" y="4" width="1" height="3" fill="#3ad83a"/><rect x="10" y="5" width="1" height="1" fill="#6cff6c"/></svg>
<span class="t" style="left:23px;top:225px;">O<em style="letter-spacing:-1.0px">S</em><em style="letter-spacing:-0.2px"> </em><em style="letter-spacing:-0.3px">(</em><em style="letter-spacing:-1.0px">C</em><em style="letter-spacing:-0.4px">:</em><em style="letter-spacing:-0.3px">)</em></span>
<span class="t" style="left:138px;top:225px;"><em style="letter-spacing:-1.0px">S</em><em style="letter-spacing:0.2px">i</em><em style="letter-spacing:0.4px">m</em><em style="letter-spacing:0.35px">p</em><em style="letter-spacing:0.2px">l</em><em style="letter-spacing:-0.25px">e</em></span>
<span class="t" style="left:214px;top:225px;"><em style="letter-spacing:-1.0px">B</em><em style="letter-spacing:-0.3px">a</em><em style="letter-spacing:-0.7px">s</em><em style="letter-spacing:0.2px">i</em><em style="letter-spacing:-0.4px">c</em></span>
<span class="t" style="left:282px;top:225px;">N<em style="letter-spacing:-1.0px">T</em><em style="letter-spacing:-0.7px">F</em><em style="letter-spacing:-1.0px">S</em></span>
<span class="t" style="left:365px;top:225px;width:182px;overflow:hidden">H<em style="letter-spacing:-0.25px">e</em><em style="letter-spacing:-0.3px">a</em><em style="letter-spacing:0.2px">l</em><em style="letter-spacing:0.6px">t</em><em style="letter-spacing:0.15px">h</em><em style="letter-spacing:-0.2px">y </em><em style="letter-spacing:-0.3px">(</em><em style="letter-spacing:-1.0px">B</em><em style="letter-spacing:0.35px">oo</em><em style="letter-spacing:0.6px">t</em><em style="letter-spacing:-0.4px">,</em><em style="letter-spacing:-0.2px"> </em><em style="letter-spacing:-1.0px">P</em><em style="letter-spacing:-0.3px">a</em><em style="letter-spacing:0.3px">g</em><em style="letter-spacing:-0.25px">e</em><em style="letter-spacing:-0.2px"> </em><em style="letter-spacing:-0.7px">F</em><em style="letter-spacing:0.2px">il</em><em style="letter-spacing:-0.25px">e</em><em style="letter-spacing:-0.4px">,</em><em style="letter-spacing:-0.2px"> </em><em style="letter-spacing:-1.0px">C</em><em style="letter-spacing:0.2px">r</em><em style="letter-spacing:-0.3px">a</em><em style="letter-spacing:-0.7px">s</em><em style="letter-spacing:0.15px">h</em><em style="letter-spacing:-0.2px"> </em><em style="letter-spacing:-0.4px">...</em></span>
<span class="t" style="left:557px;top:225px;"><em style="letter-spacing:-0.5px">99</em><em style="letter-spacing:-0.4px">.</em><em style="letter-spacing:-0.5px">40</em><em style="letter-spacing:-0.2px"> </em><em style="letter-spacing:-1.2px">G</em><em style="letter-spacing:-1.0px">B</em></span>
<span class="t" style="left:639px;top:225px;"><em style="letter-spacing:-0.5px">39</em><em style="letter-spacing:-0.4px">.</em><em style="letter-spacing:-0.5px">85</em><em style="letter-spacing:-0.2px"> </em><em style="letter-spacing:-1.2px">G</em><em style="letter-spacing:-1.0px">B</em></span>
<span class="t" style="left:721px;top:225px;"><em style="letter-spacing:-0.5px">40</em><em style="letter-spacing:-0.2px"> </em><em style="letter-spacing:-0.5px">%</em></span>
<svg style="left:6px;top:244px" width="14" height="8" viewBox="0 0 14 8" shape-rendering="crispEdges"><rect x="1" y="0" width="12" height="2" fill="#d4d6da"/><rect x="0" y="2" width="14" height="6" fill="#d9dbdf"/><rect x="1" y="2" width="12" height="1" fill="#cfd1d5"/><rect x="1" y="4" width="12" height="3" fill="#2d2d2d"/><rect x="1" y="5" width="8" height="1" fill="#383838"/><rect x="9" y="5" width="3" height="1" fill="#3ad83a"/><rect x="10" y="4" width="1" height="3" fill="#3ad83a"/><rect x="10" y="5" width="1" height="1" fill="#6cff6c"/></svg>
<span class="t" style="left:23px;top:242px;">Q<em style="letter-spacing:0.15px">u</em><em style="letter-spacing:-0.25px">e</em><em style="letter-spacing:0.15px">u</em><em style="letter-spacing:-0.25px">e</em><em style="letter-spacing:-0.2px"> </em><em style="letter-spacing:-0.3px">(</em>Q<em style="letter-spacing:-0.4px">:</em><em style="letter-spacing:-0.3px">)</em></span>
<span class="t" style="left:138px;top:242px;"><em style="letter-spacing:-1.0px">S</em><em style="letter-spacing:0.2px">i</em><em style="letter-spacing:0.4px">m</em><em style="letter-spacing:0.35px">p</em><em style="letter-spacing:0.2px">l</em><em style="letter-spacing:-0.25px">e</em></span>
<span class="t" style="left:214px;top:242px;"><em style="letter-spacing:-1.0px">B</em><em style="letter-spacing:-0.3px">a</em><em style="letter-spacing:-0.7px">s</em><em style="letter-spacing:0.2px">i</em><em style="letter-spacing:-0.4px">c</em></span>
<span class="t" style="left:282px;top:242px;">N<em style="letter-spacing:-1.0px">T</em><em style="letter-spacing:-0.7px">F</em><em style="letter-spacing:-1.0px">S</em></span>
<span class="t" style="left:365px;top:242px;width:182px;overflow:hidden">H<em style="letter-spacing:-0.25px">e</em><em style="letter-spacing:-0.3px">a</em><em style="letter-spacing:0.2px">l</em><em style="letter-spacing:0.6px">t</em><em style="letter-spacing:0.15px">h</em><em style="letter-spacing:-0.2px">y </em><em style="letter-spacing:-0.3px">(</em><em style="letter-spacing:-1.0px">P</em><em style="letter-spacing:0.2px">ri</em><em style="letter-spacing:0.4px">m</em><em style="letter-spacing:-0.3px">a</em><em style="letter-spacing:0.2px">r</em><em style="letter-spacing:-0.2px">y </em><em style="letter-spacing:-1.0px">P</em><em style="letter-spacing:-0.3px">a</em><em style="letter-spacing:0.2px">r</em><em style="letter-spacing:0.6px">t</em><em style="letter-spacing:0.2px">i</em><em style="letter-spacing:0.6px">t</em><em style="letter-spacing:0.2px">i</em><em style="letter-spacing:0.35px">o</em><em style="letter-spacing:0.15px">n</em><em style="letter-spacing:-0.3px">)</em></span>
<span class="t" style="left:557px;top:242px;"><em style="letter-spacing:-0.5px">19</em><em style="letter-spacing:-0.4px">.</em><em style="letter-spacing:-0.5px">98</em><em style="letter-spacing:-0.2px"> </em><em style="letter-spacing:-1.2px">G</em><em style="letter-spacing:-1.0px">B</em></span>
<span class="t" style="left:639px;top:242px;"><em style="letter-spacing:-0.5px">7</em><em style="letter-spacing:-0.4px">.</em><em style="letter-spacing:-0.5px">88</em><em style="letter-spacing:-0.2px"> </em><em style="letter-spacing:-1.2px">G</em><em style="letter-spacing:-1.0px">B</em></span>
<span class="t" style="left:721px;top:242px;"><em style="letter-spacing:-0.5px">39</em><em style="letter-spacing:-0.2px"> </em><em style="letter-spacing:-0.5px">%</em></span>
<div style="left:3px;top:135px;width:766px;height:89px;border:3px solid #ff0000"></div>
<div style="left:3px;top:269px;width:793px;height:17px;background:#f0f0f0"></div>
<div style="left:20px;top:269px;width:748px;height:15px;background:#cdcdcd"></div>
<svg style="left:8px;top:273px" width="8" height="8" viewBox="0 0 8 8"><path d="M0 3.5L4.1 0H7L3 3.5L7 7H4.1Z" fill="#606060"/></svg>
<svg style="left:783px;top:273px" width="8" height="8" viewBox="0 0 8 8"><path d="M7 3.5L2.9 0H0L4 3.5L0 7H2.9Z" fill="#606060"/></svg>
<div style="left:3px;top:288px;width:793px;height:3px;background:#f0f0f0"></div>
<div style="left:3px;top:287px;width:793px;height:1px;background:#fff"></div>
<div style="left:3px;top:288px;width:792px;height:1px;background:#e8e8e8"></div>
<div style="left:3px;top:290px;width:792px;height:1px;background:#f6f6f6"></div>
<div style="left:3px;top:291px;width:792px;height:1px;background:#a0a0a0"></div>
<div style="left:2px;top:292px;width:794px;height:1px;background:#696969"></div>
<div style="left:794px;top:287px;width:1px;height:6px;background:#696969"></div>
<div style="left:793px;top:288px;width:1px;height:4px;background:#a0a0a0"></div>
<div style="left:3px;top:293px;width:793px;height:335px;overflow:hidden;background:#f0f0f0">
<div style="left:0px;top:5px;width:103px;height:1px;background:#fff"></div>
<div style="left:100px;top:5px;width:1px;height:97px;background:#fff"></div>
<div style="left:0px;top:102px;width:775px;height:1px;background:#a0a0a0"></div>
<svg style="left:11px;top:14px" width="14" height="8" viewBox="0 0 14 8" shape-rendering="crispEdges"><rect x="1" y="0" width="12" height="2" fill="#d4d6da"/><rect x="0" y="2" width="14" height="6" fill="#d9dbdf"/><rect x="1" y="2" width="12" height="1" fill="#cfd1d5"/><rect x="1" y="4" width="12" height="3" fill="#2d2d2d"/><rect x="1" y="5" width="8" height="1" fill="#383838"/><rect x="9" y="5" width="3" height="1" fill="#3ad83a"/><rect x="10" y="4" width="1" height="3" fill="#3ad83a"/><rect x="10" y="5" width="1" height="1" fill="#6cff6c"/></svg>
<span class="t" style="left:27px;top:14px;font-weight:bold"><em style="letter-spacing:-0.4px">D</em><em style="letter-spacing:0.2px">i</em><em style="letter-spacing:-0.7px">s</em>k<em style="letter-spacing:-0.2px"> </em><em style="letter-spacing:-0.5px">0</em></span>
<span class="t" style="left:9px;top:29px;"><em style="letter-spacing:-1.0px">B</em><em style="letter-spacing:-0.3px">a</em><em style="letter-spacing:-0.7px">s</em><em style="letter-spacing:0.2px">i</em><em style="letter-spacing:-0.4px">c</em></span>
<span class="t" style="left:9px;top:44px;"><em style="letter-spacing:-0.5px">99</em><em style="letter-spacing:-0.4px">.</em><em style="letter-spacing:-0.5px">98</em><em style="letter-spacing:-0.2px"> </em><em style="letter-spacing:-1.2px">G</em><em style="letter-spacing:-1.0px">B</em></span>
<span class="t" style="left:9px;top:59px;">O<em style="letter-spacing:0.15px">n</em><em style="letter-spacing:0.2px">li</em><em style="letter-spacing:0.15px">n</em><em style="letter-spacing:-0.25px">e</em></span>
<div style="left:103px;top:5px;width:1px;height:100px;background:#a0a0a0"></div>
<div style="left:104px;top:10px;width:184px;height:1px;background:#fff"></div>
<div style="left:104px;top:10px;width:1px;height:88px;background:#fff"></div>
<div style="left:105px;top:11px;width:183px;height:13px;background:#000080"></div>
<div style="left:288px;top:10px;width:1px;height:15px;background:#a0a0a0"></div>
<div style="left:104px;top:24px;width:184px;height:1px;background:#a0a0a0"></div>
<div style="left:108px;top:27px;width:177px;height:68px;background:#fff;border-left:1px solid #a0a0a0;border-top:1px solid #a0a0a0"></div>
<span class="t" style="left:112px;top:46px;width:171px;overflow:hidden"><em style="letter-spacing:-0.5px">499</em><em style="letter-spacing:-0.2px"> </em><em style="letter-spacing:0.5px">M</em><em style="letter-spacing:-1.0px">B</em></span>
<span class="t" style="left:112px;top:61px;width:171px;overflow:hidden">H<em style="letter-spacing:-0.25px">e</em><em style="letter-spacing:-0.3px">a</em><em style="letter-spacing:0.2px">l</em><em style="letter-spacing:0.6px">t</em><em style="letter-spacing:0.15px">h</em><em style="letter-spacing:-0.2px">y </em><em style="letter-spacing:-0.3px">(</em><em style="letter-spacing:-1.1px">R</em><em style="letter-spacing:-0.25px">e</em><em style="letter-spacing:-0.4px">c</em><em style="letter-spacing:0.35px">o</em><em style="letter-spacing:-0.2px">v</em><em style="letter-spacing:-0.25px">e</em><em style="letter-spacing:0.2px">r</em><em style="letter-spacing:-0.2px">y </em><em style="letter-spacing:-1.0px">P</em><em style="letter-spacing:-0.3px">a</em><em style="letter-spacing:0.2px">r</em><em style="letter-spacing:0.6px">t</em><em style="letter-spacing:0.2px">i</em><em style="letter-spacing:0.6px">t</em><em style="letter-spacing:0.2px">i</em><em style="letter-spacing:0.35px">o</em><em style="letter-spacing:0.15px">n</em><em style="letter-spacing:-0.3px">)</em></span>
<div style="left:289px;top:10px;width:1px;height:89px;background:#a0a0a0"></div>
<div style="left:290px;top:10px;width:135px;height:1px;background:#fff"></div>
<div style="left:290px;top:10px;width:1px;height:88px;background:#fff"></div>
<div style="left:291px;top:11px;width:134px;height:13px;background:#000080"></div>
<div style="left:425px;top:10px;width:1px;height:15px;background:#a0a0a0"></div>
<div style="left:290px;top:24px;width:135px;height:1px;background:#a0a0a0"></div>
<div style="left:294px;top:27px;width:128px;height:68px;background:#fff;border-left:1px solid #a0a0a0;border-top:1px solid #a0a0a0"></div>
<span class="t" style="left:298px;top:46px;width:122px;overflow:hidden"><em style="letter-spacing:-0.5px">99</em><em style="letter-spacing:-0.2px"> </em><em style="letter-spacing:0.5px">M</em><em style="letter-spacing:-1.0px">B</em></span>
<span class="t" style="left:298px;top:61px;width:122px;overflow:hidden">H<em style="letter-spacing:-0.25px">e</em><em style="letter-spacing:-0.3px">a</em><em style="letter-spacing:0.2px">l</em><em style="letter-spacing:0.6px">t</em><em style="letter-spacing:0.15px">h</em><em style="letter-spacing:-0.2px">y </em><em style="letter-spacing:-0.3px">(</em><em style="letter-spacing:-0.5px">E</em><em style="letter-spacing:-0.7px">F</em><em style="letter-spacing:-0.2px">I </em><em style="letter-spacing:-1.0px">S</em><em style="letter-spacing:-0.2px">y</em><em style="letter-spacing:-0.7px">s</em><em style="letter-spacing:0.6px">t</em><em style="letter-spacing:-0.25px">e</em><em style="letter-spacing:0.4px">m</em><em style="letter-spacing:-0.2px"> </em><em style="letter-spacing:-1.0px">P</em><em style="letter-spacing:-0.3px">a</em><em style="letter-spacing:0.2px">r</em><em style="letter-spacing:0.6px">t</em><em style="letter-spacing:0.2px">i</em><em style="letter-spacing:0.6px">t</em><em style="letter-spacing:0.2px">i</em><em style="letter-spacing:0.35px">o</em><em style="letter-spacing:0.15px">n</em><em style="letter-spacing:-0.3px">)</em></span>
<div style="left:426px;top:10px;width:1px;height:89px;background:#a0a0a0"></div>
<div style="left:427px;top:10px;width:344px;height:1px;background:#fff"></div>
<div style="left:427px;top:10px;width:1px;height:88px;background:#fff"></div>
<div style="left:428px;top:11px;width:343px;height:13px;background:#000080"></div>
<div style="left:771px;top:10px;width:1px;height:15px;background:#a0a0a0"></div>
<div style="left:427px;top:24px;width:344px;height:1px;background:#a0a0a0"></div>
<div style="left:772px;top:10px;width:1px;height:89px;background:#a0a0a0"></div>
<div style="left:103px;top:98px;width:670px;height:1px;background:#a0a0a0"></div>
<div style="left:431px;top:27px;width:337px;height:68px;background:#fff;border-left:1px solid #a0a0a0;border-top:1px solid #a0a0a0"></div>
<span class="t" style="left:435px;top:31px;font-weight:bold;width:331px;overflow:hidden">O<em style="letter-spacing:-1.0px">S</em><em style="letter-spacing:-0.2px">  </em><em style="letter-spacing:-0.3px">(</em><em style="letter-spacing:-1.0px">C</em><em style="letter-spacing:-0.4px">:</em><em style="letter-spacing:-0.3px">)</em></span>
<span class="t" style="left:435px;top:46px;width:331px;overflow:hidden"><em style="letter-spacing:-0.5px">99</em><em style="letter-spacing:-0.4px">.</em><em style="letter-spacing:-0.5px">40</em><em style="letter-spacing:-0.2px"> </em><em style="letter-spacing:-1.2px">G</em><em style="letter-spacing:-1.0px">B</em><em style="letter-spacing:-0.2px"> </em>N<em style="letter-spacing:-1.0px">T</em><em style="letter-spacing:-0.7px">F</em><em style="letter-spacing:-1.0px">S</em></span>
<span class="t" style="left:435px;top:61px;width:331px;overflow:hidden">H<em style="letter-spacing:-0.25px">e</em><em style="letter-spacing:-0.3px">a</em><em style="letter-spacing:0.2px">l</em><em style="letter-spacing:0.6px">t</em><em style="letter-spacing:0.15px">h</em><em style="letter-spacing:-0.2px">y </em><em style="letter-spacing:-0.3px">(</em><em style="letter-spacing:-1.0px">B</em><em style="letter-spacing:0.35px">oo</em><em style="letter-spacing:0.6px">t</em><em style="letter-spacing:-0.4px">,</em><em style="letter-spacing:-0.2px"> </em><em style="letter-spacing:-1.0px">P</em><em style="letter-spacing:-0.3px">a</em><em style="letter-spacing:0.3px">g</em><em style="letter-spacing:-0.25px">e</em><em style="letter-spacing:-0.2px"> </em><em style="letter-spacing:-0.7px">F</em><em style="letter-spacing:0.2px">il</em><em style="letter-spacing:-0.25px">e</em><em style="letter-spacing:-0.4px">,</em><em style="letter-spacing:-0.2px"> </em><em style="letter-spacing:-1.0px">C</em><em style="letter-spacing:0.2px">r</em><em style="letter-spacing:-0.3px">a</em><em style="letter-spacing:-0.7px">s</em><em style="letter-spacing:0.15px">h</em><em style="letter-spacing:-0.2px"> </em><em style="letter-spacing:-0.4px">D</em><em style="letter-spacing:0.15px">u</em><em style="letter-spacing:0.4px">m</em><em style="letter-spacing:0.35px">p</em><em style="letter-spacing:-0.4px">,</em><em style="letter-spacing:-0.2px"> </em><em style="letter-spacing:-1.0px">P</em><em style="letter-spacing:0.2px">ri</em><em style="letter-spacing:0.4px">m</em><em style="letter-spacing:-0.3px">a</em><em style="letter-spacing:0.2px">r</em><em style="letter-spacing:-0.2px">y </em><em style="letter-spacing:-1.0px">P</em><em style="letter-spacing:-0.3px">a</em><em style="letter-spacing:0.2px">r</em><em style="letter-spacing:0.6px">t</em><em style="letter-spacing:0.2px">i</em><em style="letter-spacing:0.6px">t</em><em style="letter-spacing:0.2px">i</em><em style="letter-spacing:0.35px">o</em><em style="letter-spacing:0.15px">n</em><em style="letter-spacing:-0.3px">)</em></span>
<div style="left:0px;top:104px;width:103px;height:1px;background:#fff"></div>
<div style="left:100px;top:104px;width:1px;height:97px;background:#fff"></div>
<div style="left:0px;top:201px;width:775px;height:1px;background:#a0a0a0"></div>
<svg style="left:11px;top:113px" width="14" height="8" viewBox="0 0 14 8" shape-rendering="crispEdges"><rect x="1" y="0" width="12" height="2" fill="#d4d6da"/><rect x="0" y="2" width="14" height="6" fill="#d9dbdf"/><rect x="1" y="2" width="12" height="1" fill="#cfd1d5"/><rect x="1" y="4" width="12" height="3" fill="#2d2d2d"/><rect x="1" y="5" width="8" height="1" fill="#383838"/><rect x="9" y="5" width="3" height="1" fill="#3ad83a"/><rect x="10" y="4" width="1" height="3" fill="#3ad83a"/><rect x="10" y="5" width="1" height="1" fill="#6cff6c"/></svg>
<span class="t" style="left:27px;top:113px;font-weight:bold"><em style="letter-spacing:-0.4px">D</em><em style="letter-spacing:0.2px">i</em><em style="letter-spacing:-0.7px">s</em>k<em style="letter-spacing:-0.2px"> </em><em style="letter-spacing:-0.5px">1</em></span>
<span class="t" style="left:9px;top:128px;"><em style="letter-spacing:-1.0px">B</em><em style="letter-spacing:-0.3px">a</em><em style="letter-spacing:-0.7px">s</em><em style="letter-spacing:0.2px">i</em><em style="letter-spacing:-0.4px">c</em></span>
<span class="t" style="left:9px;top:143px;"><em style="letter-spacing:-0.5px">99</em><em style="letter-spacing:-0.4px">.</em><em style="letter-spacing:-0.5px">98</em><em style="letter-spacing:-0.2px"> </em><em style="letter-spacing:-1.2px">G</em><em style="letter-spacing:-1.0px">B</em></span>
<span class="t" style="left:9px;top:158px;">O<em style="letter-spacing:0.15px">n</em><em style="letter-spacing:0.2px">li</em><em style="letter-spacing:0.15px">n</em><em style="letter-spacing:-0.25px">e</em></span>
<div style="left:103px;top:106px;width:1px;height:98px;background:#a0a0a0"></div>
<div style="left:104px;top:109px;width:667px;height:1px;background:#fff"></div>
<div style="left:104px;top:109px;width:1px;height:88px;background:#fff"></div>
<div style="left:105px;top:110px;width:666px;height:13px;background:#000080"></div>
<div style="left:771px;top:109px;width:1px;height:15px;background:#a0a0a0"></div>
<div style="left:104px;top:123px;width:667px;height:1px;background:#a0a0a0"></div>
<div style="left:772px;top:109px;width:1px;height:89px;background:#a0a0a0"></div>
<div style="left:103px;top:197px;width:670px;height:1px;background:#a0a0a0"></div>
<div style="left:108px;top:126px;width:660px;height:68px;background:#fff;border-left:1px solid #a0a0a0;border-top:1px solid #a0a0a0"></div>
<span class="t" style="left:112px;top:130px;font-weight:bold;width:654px;overflow:hidden"><em style="letter-spacing:-0.4px">D</em><em style="letter-spacing:-1.0px">B</em><em style="letter-spacing:-0.5px">01</em></span>
<span class="t" style="left:112px;top:145px;width:654px;overflow:hidden"><em style="letter-spacing:-0.5px">99</em><em style="letter-spacing:-0.4px">.</em><em style="letter-spacing:-0.5px">98</em><em style="letter-spacing:-0.2px"> </em><em style="letter-spacing:-1.2px">G</em><em style="letter-spacing:-1.0px">B</em><em style="letter-spacing:-0.2px"> </em><em style="letter-spacing:-1.1px">R</em><em style="letter-spacing:-0.25px">e</em><em style="letter-spacing:-0.7px">F</em><em style="letter-spacing:-1.0px">S</em></span>
<span class="t" style="left:112px;top:160px;width:654px;overflow:hidden">H<em style="letter-spacing:-0.25px">e</em><em style="letter-spacing:-0.3px">a</em><em style="letter-spacing:0.2px">l</em><em style="letter-spacing:0.6px">t</em><em style="letter-spacing:0.15px">h</em><em style="letter-spacing:-0.2px">y </em><em style="letter-spacing:-0.3px">(</em><em style="letter-spacing:-1.0px">P</em><em style="letter-spacing:0.2px">ri</em><em style="letter-spacing:0.4px">m</em><em style="letter-spacing:-0.3px">a</em><em style="letter-spacing:0.2px">r</em><em style="letter-spacing:-0.2px">y </em><em style="letter-spacing:-1.0px">P</em><em style="letter-spacing:-0.3px">a</em><em style="letter-spacing:0.2px">r</em><em style="letter-spacing:0.6px">t</em><em style="letter-spacing:0.2px">i</em><em style="letter-spacing:0.6px">t</em><em style="letter-spacing:0.2px">i</em><em style="letter-spacing:0.35px">o</em><em style="letter-spacing:0.15px">n</em><em style="letter-spacing:-0.3px">)</em></span>
<div style="left:0px;top:203px;width:103px;height:1px;background:#fff"></div>
<div style="left:100px;top:203px;width:1px;height:97px;background:#fff"></div>
<div style="left:0px;top:300px;width:775px;height:1px;background:#a0a0a0"></div>
<svg style="left:11px;top:212px" width="14" height="8" viewBox="0 0 14 8" shape-rendering="crispEdges"><rect x="1" y="0" width="12" height="2" fill="#d4d6da"/><rect x="0" y="2" width="14" height="6" fill="#d9dbdf"/><rect x="1" y="2" width="12" height="1" fill="#cfd1d5"/><rect x="1" y="4" width="12" height="3" fill="#2d2d2d"/><rect x="1" y="5" width="8" height="1" fill="#383838"/><rect x="9" y="5" width="3" height="1" fill="#3ad83a"/><rect x="10" y="4" width="1" height="3" fill="#3ad83a"/><rect x="10" y="5" width="1" height="1" fill="#6cff6c"/></svg>
<span class="t" style="left:27px;top:212px;font-weight:bold"><em style="letter-spacing:-0.4px">D</em><em style="letter-spacing:0.2px">i</em><em style="letter-spacing:-0.7px">s</em>k<em style="letter-spacing:-0.2px"> </em><em style="letter-spacing:-0.5px">2</em></span>
<span class="t" style="left:9px;top:227px;"><em style="letter-spacing:-1.0px">B</em><em style="letter-spacing:-0.3px">a</em><em style="letter-spacing:-0.7px">s</em><em style="letter-spacing:0.2px">i</em><em style="letter-spacing:-0.4px">c</em></span>
<span class="t" style="left:9px;top:242px;"><em style="letter-spacing:-0.5px">99</em><em style="letter-spacing:-0.4px">.</em><em style="letter-spacing:-0.5px">98</em><em style="letter-spacing:-0.2px"> </em><em style="letter-spacing:-1.2px">G</em><em style="letter-spacing:-1.0px">B</em></span>
<span class="t" style="left:9px;top:257px;">O<em style="letter-spacing:0.15px">n</em><em style="letter-spacing:0.2px">li</em><em style="letter-spacing:0.15px">n</em><em style="letter-spacing:-0.25px">e</em></span>
<div style="left:103px;top:205px;width:1px;height:98px;background:#a0a0a0"></div>
<div style="left:104px;top:208px;width:667px;height:1px;background:#fff"></div>
<div style="left:104px;top:208px;width:1px;height:88px;background:#fff"></div>
<div style="left:105px;top:209px;width:666px;height:13px;background:#000080"></div>
<div style="left:771px;top:208px;width:1px;height:15px;background:#a0a0a0"></div>
<div style="left:104px;top:222px;width:667px;height:1px;background:#a0a0a0"></div>
<div style="left:772px;top:208px;width:1px;height:89px;background:#a0a0a0"></div>
<div style="left:103px;top:296px;width:670px;height:1px;background:#a0a0a0"></div>
<div style="left:108px;top:225px;width:660px;height:68px;background:#fff;border-left:1px solid #a0a0a0;border-top:1px solid #a0a0a0"></div>
<span class="t" style="left:112px;top:229px;font-weight:bold;width:654px;overflow:hidden"><em style="letter-spacing:-0.4px">D</em><em style="letter-spacing:-1.0px">B</em><em style="letter-spacing:-0.5px">02</em></span>
<span class="t" style="left:112px;top:244px;width:654px;overflow:hidden"><em style="letter-spacing:-0.5px">99</em><em style="letter-spacing:-0.4px">.</em><em style="letter-spacing:-0.5px">98</em><em style="letter-spacing:-0.2px"> </em><em style="letter-spacing:-1.2px">G</em><em style="letter-spacing:-1.0px">B</em><em style="letter-spacing:-0.2px"> </em><em style="letter-spacing:-1.1px">R</em><em style="letter-spacing:-0.25px">e</em><em style="letter-spacing:-0.7px">F</em><em style="letter-spacing:-1.0px">S</em></span>
<span class="t" style="left:112px;top:259px;width:654px;overflow:hidden">H<em style="letter-spacing:-0.25px">e</em><em style="letter-spacing:-0.3px">a</em><em style="letter-spacing:0.2px">l</em><em style="letter-spacing:0.6px">t</em><em style="letter-spacing:0.15px">h</em><em style="letter-spacing:-0.2px">y </em><em style="letter-spacing:-0.3px">(</em><em style="letter-spacing:-1.0px">P</em><em style="letter-spacing:0.2px">ri</em><em style="letter-spacing:0.4px">m</em><em style="letter-spacing:-0.3px">a</em><em style="letter-spacing:0.2px">r</em><em style="letter-spacing:-0.2px">y </em><em style="letter-spacing:-1.0px">P</em><em style="letter-spacing:-0.3px">a</em><em style="letter-spacing:0.2px">r</em><em style="letter-spacing:0.6px">t</em><em style="letter-spacing:0.2px">i</em><em style="letter-spacing:0.6px">t</em><em style="letter-spacing:0.2px">i</em><em style="letter-spacing:0.35px">o</em><em style="letter-spacing:0.15px">n</em><em style="letter-spacing:-0.3px">)</em></span>
<div style="left:0px;top:302px;width:103px;height:1px;background:#fff"></div>
<div style="left:100px;top:302px;width:1px;height:97px;background:#fff"></div>
<div style="left:0px;top:399px;width:775px;height:1px;background:#a0a0a0"></div>
<svg style="left:11px;top:311px" width="14" height="8" viewBox="0 0 14 8" shape-rendering="crispEdges"><rect x="1" y="0" width="12" height="2" fill="#d4d6da"/><rect x="0" y="2" width="14" height="6" fill="#d9dbdf"/><rect x="1" y="2" width="12" height="1" fill="#cfd1d5"/><rect x="1" y="4" width="12" height="3" fill="#2d2d2d"/><rect x="1" y="5" width="8" height="1" fill="#383838"/><rect x="9" y="5" width="3" height="1" fill="#3ad83a"/><rect x="10" y="4" width="1" height="3" fill="#3ad83a"/><rect x="10" y="5" width="1" height="1" fill="#6cff6c"/></svg>
<span class="t" style="left:27px;top:311px;font-weight:bold"><em style="letter-spacing:-0.4px">D</em><em style="letter-spacing:0.2px">i</em><em style="letter-spacing:-0.7px">s</em>k<em style="letter-spacing:-0.2px"> </em><em style="letter-spacing:-0.5px">3</em></span>
<span class="t" style="left:9px;top:326px;"><em style="letter-spacing:-1.0px">B</em><em style="letter-spacing:-0.3px">a</em><em style="letter-spacing:-0.7px">s</em><em style="letter-spacing:0.2px">i</em><em style="letter-spacing:-0.4px">c</em></span>
<span class="t" style="left:9px;top:341px;"><em style="letter-spacing:-0.5px">99</em><em style="letter-spacing:-0.4px">.</em><em style="letter-spacing:-0.5px">98</em><em style="letter-spacing:-0.2px"> </em><em style="letter-spacing:-1.2px">G</em><em style="letter-spacing:-1.0px">B</em></span>
<span class="t" style="left:9px;top:356px;">O<em style="letter-spacing:0.15px">n</em><em style="letter-spacing:0.2px">li</em><em style="letter-spacing:0.15px">n</em><em style="letter-spacing:-0.25px">e</em></span>
<div style="left:103px;top:304px;width:1px;height:98px;background:#a0a0a0"></div>
<div style="left:104px;top:307px;width:667px;height:1px;background:#fff"></div>
<div style="left:104px;top:307px;width:1px;height:88px;background:#fff"></div>
<div style="left:105px;top:308px;width:666px;height:13px;background:#000080"></div>
<div style="left:771px;top:307px;width:1px;height:15px;background:#a0a0a0"></div>
<div style="left:104px;top:321px;width:667px;height:1px;background:#a0a0a0"></div>
<div style="left:772px;top:307px;width:1px;height:89px;background:#a0a0a0"></div>
<div style="left:103px;top:395px;width:670px;height:1px;background:#a0a0a0"></div>
<div style="left:108px;top:324px;width:660px;height:68px;background:#fff;border-left:1px solid #a0a0a0;border-top:1px solid #a0a0a0"></div>
<span class="t" style="left:112px;top:328px;font-weight:bold;width:654px;overflow:hidden"><em style="letter-spacing:-0.4px">D</em><em style="letter-spacing:-1.0px">B</em><em style="letter-spacing:-0.5px">03</em></span>
<span class="t" style="left:112px;top:343px;width:654px;overflow:hidden"><em style="letter-spacing:-0.5px">99</em><em style="letter-spacing:-0.4px">.</em><em style="letter-spacing:-0.5px">98</em><em style="letter-spacing:-0.2px"> </em><em style="letter-spacing:-1.2px">G</em><em style="letter-spacing:-1.0px">B</em><em style="letter-spacing:-0.2px"> </em><em style="letter-spacing:-1.1px">R</em><em style="letter-spacing:-0.25px">e</em><em style="letter-spacing:-0.7px">F</em><em style="letter-spacing:-1.0px">S</em></span>
<span class="t" style="left:112px;top:358px;width:654px;overflow:hidden">H<em style="letter-spacing:-0.25px">e</em><em style="letter-spacing:-0.3px">a</em><em style="letter-spacing:0.2px">l</em><em style="letter-spacing:0.6px">t</em><em style="letter-spacing:0.15px">h</em><em style="letter-spacing:-0.2px">y </em><em style="letter-spacing:-0.3px">(</em><em style="letter-spacing:-1.0px">P</em><em style="letter-spacing:0.2px">ri</em><em style="letter-spacing:0.4px">m</em><em style="letter-spacing:-0.3px">a</em><em style="letter-spacing:0.2px">r</em><em style="letter-spacing:-0.2px">y </em><em style="letter-spacing:-1.0px">P</em><em style="letter-spacing:-0.3px">a</em><em style="letter-spacing:0.2px">r</em><em style="letter-spacing:0.6px">t</em><em style="letter-spacing:0.2px">i</em><em style="letter-spacing:0.6px">t</em><em style="letter-spacing:0.2px">i</em><em style="letter-spacing:0.35px">o</em><em style="letter-spacing:0.15px">n</em><em style="letter-spacing:-0.3px">)</em></span>
<div style="left:775px;top:-1px;width:18px;height:336px;background:#f0f0f0"></div>
<div style="left:776px;top:17px;width:15px;height:134px;background:#cdcdcd"></div>
<div style="left:775px;top:-1px;width:1px;height:336px;background:#fff"></div>
<div style="left:792px;top:-1px;width:1px;height:336px;background:#e3e3e3"></div>
<svg style="left:780px;top:6px" width="8" height="8" viewBox="0 0 8 8"><path d="M3.5 0L7 4V6.8L3.5 3L0 6.8V4Z" fill="#606060"/></svg>
<svg style="left:780px;top:324px" width="8" height="8" viewBox="0 0 8 8"><path d="M3.5 6.8L7 2.8V0L3.5 3.8L0 0V2.8Z" fill="#606060"/></svg>
</div>
<div style="left:3px;top:288px;width:1px;height:3px;background:#fff"></div>
<div style="left:3px;top:292px;width:1px;height:355px;background:#fff"></div>
<div style="left:796px;top:287px;width:1px;height:361px;background:#fff"></div>
<div style="left:4px;top:628px;width:791px;height:1px;background:#fff"></div>
<div style="left:4px;top:629px;width:790px;height:18px;background:#f0f0f0"></div>
<div style="left:3px;top:647px;width:792px;height:1px;background:#8c8c8c"></div>
<div style="left:794px;top:628px;width:1px;height:20px;background:#8c8c8c"></div>
<div style="left:7px;top:631px;width:13px;height:14px;background:#000;border:1px solid #fff"></div>
<div style="left:92px;top:631px;width:12px;height:14px;background:#000080;border-left:1px solid #b8b4a8;border-top:1px solid #b8b4a8;border-right:1px solid #fff;border-bottom:1px solid #fff"></div>
<span class="t" style="left:24px;top:631px;"><em style="letter-spacing:-0.2px">U</em><em style="letter-spacing:0.15px">n</em><em style="letter-spacing:-0.3px">a</em><em style="letter-spacing:0.2px">ll</em><em style="letter-spacing:0.35px">o</em><em style="letter-spacing:-0.4px">c</em><em style="letter-spacing:-0.3px">a</em><em style="letter-spacing:0.6px">t</em><em style="letter-spacing:-0.25px">e</em><em style="letter-spacing:0.3px">d</em></span>
<span class="t" style="left:109px;top:631px;"><em style="letter-spacing:-1.0px">P</em><em style="letter-spacing:0.2px">ri</em><em style="letter-spacing:0.4px">m</em><em style="letter-spacing:-0.3px">a</em><em style="letter-spacing:0.2px">r</em><em style="letter-spacing:-0.2px">y </em><em style="letter-spacing:0.35px">p</em><em style="letter-spacing:-0.3px">a</em><em style="letter-spacing:0.2px">r</em><em style="letter-spacing:0.6px">t</em><em style="letter-spacing:0.2px">i</em><em style="letter-spacing:0.6px">t</em><em style="letter-spacing:0.2px">i</em><em style="letter-spacing:0.35px">o</em><em style="letter-spacing:0.15px">n</em></span>
<div style="left:1px;top:648px;width:796px;height:25px;background:#f0f0f0"></div>
<div style="left:1px;top:650px;width:796px;height:1px;background:#e3e3e3"></div>
<div style="left:576px;top:652px;width:1px;height:20px;background:#dadada"></div>
<div style="left:709px;top:652px;width:1px;height:20px;background:#dadada"></div>
<div style="left:794px;top:652px;width:1px;height:20px;background:#dadada"></div>
</body></html>
